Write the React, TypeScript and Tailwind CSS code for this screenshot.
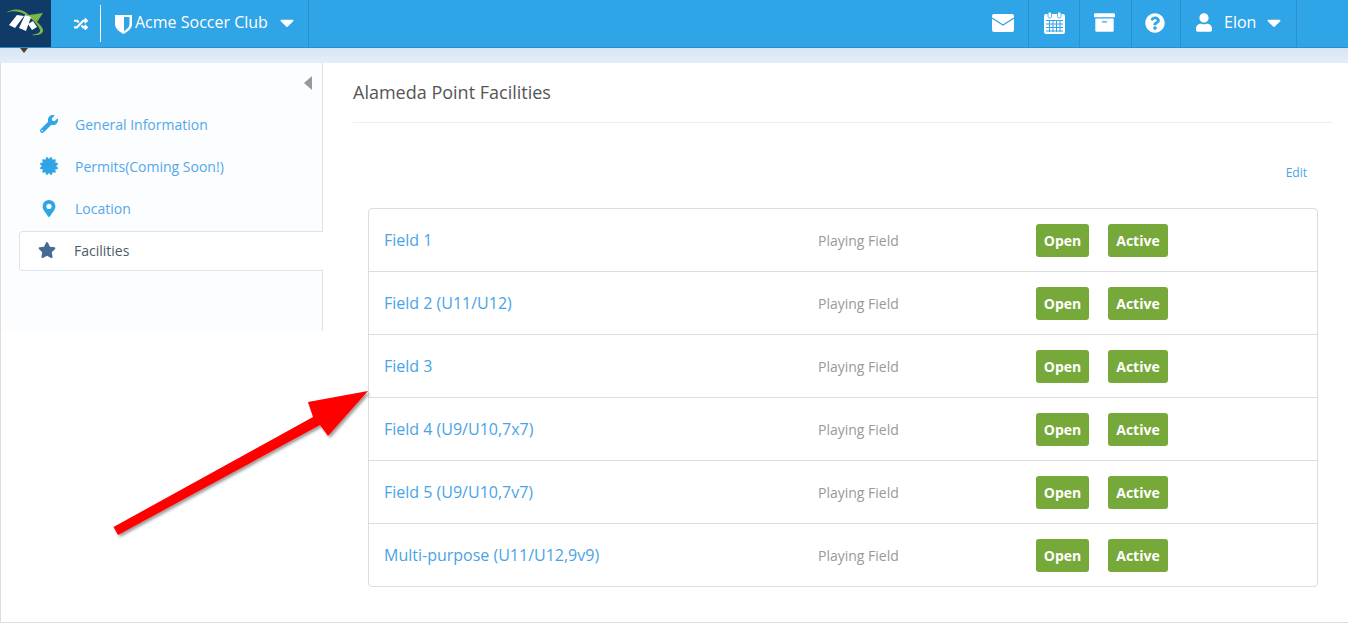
import { FaArchive, FaCaretDown, FaCertificate, FaMapMarkerAlt, FaQuestionCircle, FaRandom, FaStar, FaUser, FaWrench } from "react-icons/fa";

const fields = [
  "Field 1",
  "Field 2 (U11/U12)",
  "Field 3",
  "Field 4 (U9/U10,7x7)",
  "Field 5 (U9/U10,7v7)",
  "Multi-purpose (U11/U12,9v9)",
];

function Logo() {
  return (
    <div className="w-[51px] h-[47px] bg-[#0f3b66]">
      <svg width="51" height="47" viewBox="0 0 51 47">
        <path d="M6 13 C12 8 22 8 29 15 L43 13 L37 22 C42 26 45 31 42 33 C40 35 36 35.5 32 35 C36 34 40 33 40 31 C40 28 37 25 34 21 L26 15 C20 11 12 10 6 13Z" fill="#7ab648" />
        <path d="M9 25 L17 15 L24 16 L15 28Z M19 28 L25 15 L31 17 L26 31Z M28 24 L33 21 L37 27 L32 30Z" fill="#ffffff" />
      </svg>
    </div>
  );
}

function ShieldIcon() {
  return (
    <svg width="17" height="20" viewBox="0 0 17 20" className="ml-[14px]">
      <path fillRule="evenodd" fill="#ffffff" d="M0 1 H17 V10 C17 15 12 18 8.5 20 C5 18 0 15 0 10Z M9 3 H14.5 V10 C14.5 13 11.5 15.5 9 17Z" />
    </svg>
  );
}

function EnvelopeIcon() {
  return (
    <svg width="22" height="18" viewBox="0 0 22 18">
      <rect width="22" height="18" rx="2" fill="#ffffff" />
      <path d="M0 4 L11 11 L22 4" fill="none" stroke="#2fa4e7" strokeWidth="1.3" />
    </svg>
  );
}

function CalendarIcon() {
  return (
    <svg width="21" height="22" viewBox="0 0 21 22">
      <rect y="2" width="21" height="20" rx="2" fill="#ffffff" />
      <rect x="4" width="3.5" height="6" rx="1.5" fill="#ffffff" stroke="#2fa4e7" strokeWidth="0.8" />
      <rect x="13.5" width="3.5" height="6" rx="1.5" fill="#ffffff" stroke="#2fa4e7" strokeWidth="0.8" />
      <path d="M2 8.5 H19 M2 12 H19 M2 15.5 H19 M2 19 H19 M5.5 8 V20 M9 8 V20 M12.5 8 V20 M16 8 V20" stroke="#2fa4e7" strokeWidth="1" />
    </svg>
  );
}

function NavIcon({ children, width }: { children: React.ReactNode; width: string }) {
  return <div className={`h-[47px] pb-[2px] border-r border-[#2a90cf] flex items-center justify-center text-white ${width}`}>{children}</div>;
}

function SideItem({ icon, label, active }: { icon: React.ReactNode; label: string; active?: boolean }) {
  if (active) {
    return (
      <div className="h-[40px] mt-[2px] ml-[18px] -mr-px pb-[2px] flex items-center bg-white border border-r-0 border-[#dde3ea] rounded-l-[4px] text-[#4a5a6a] relative">
        <span className="w-[54px] pl-[18px] text-[#456b94]">{icon}</span>
        <span className="text-[14px]">{label}</span>
      </div>
    );
  }
  return (
    <div className="h-[42px] pl-[38px] flex items-center text-[#55a7ea]">
      <span className="w-[36px] pl-px text-[#2fa4e7]">{icon}</span>
      <span className="text-[14px]">{label}</span>
    </div>
  );
}

function FieldRow({ name, last }: { name: string; last: boolean }) {
  return (
    <div className={`flex items-center pl-[15px] ${last ? "h-[62px]" : "h-[63px] border-b border-[#dddddd]"}`}>
      <div className="w-[434px] text-[16px] text-[#4aa3e6]">{name}</div>
      <div className="w-[218px] text-[14px] text-[#999999]">Playing Field</div>
      <span className="w-[53px] h-[33px] rounded-[3px] bg-[#76a83a] text-white text-[14px] font-bold flex items-center justify-center">Open</span>
      <span className="w-[60px] h-[33px] ml-[19px] rounded-[3px] bg-[#76a83a] text-white text-[14px] font-bold flex items-center justify-center">Active</span>
    </div>
  );
}

export default function App() {
  return (
    <div className="w-[1348px] h-[624px] overflow-hidden bg-white relative font-['Open_Sans',sans-serif]">
      <header className="h-[48px] bg-[#2fa4e7] border-b border-[#2a8cc8] flex items-start relative z-10">
        <Logo />
        <div className="w-[258px] h-[47px] border-r border-[#2a90cf] flex items-center text-white">
          <FaRandom className="ml-[22px] w-[16px] h-[14px]" />
          <div className="w-px h-[37px] bg-white ml-[11px]" />
          <ShieldIcon />
          <span className="ml-[3px] mb-[3px] text-[16px]">Acme Soccer Club</span>
          <FaCaretDown className="ml-[12px] mb-[2px] w-[14px] h-[23px]" />
        </div>
        <div className="ml-auto flex">
          <NavIcon width="w-[49px] pr-[3px]"><EnvelopeIcon /></NavIcon>
          <NavIcon width="w-[51px]"><CalendarIcon /></NavIcon>
          <NavIcon width="w-[52px] pr-[2px]"><FaArchive className="w-[21px] h-[21px]" /></NavIcon>
          <NavIcon width="w-[49px] pr-[2px]"><FaQuestionCircle className="w-[20px] h-[20px]" /></NavIcon>
          <div className="w-[116px] h-[47px] pb-[2px] border-r border-[#2a90cf] flex items-center text-white pl-[15px]">
            <FaUser className="w-[16px] h-[19px]" />
            <span className="ml-[12px] mb-[1px] text-[16px]">Elon</span>
            <FaCaretDown className="ml-[11px] w-[14px] h-[23px]" />
          </div>
        </div>
        <div className="w-[51px]" />
      </header>
      <div className="absolute left-[20px] top-[48px] w-0 h-0 border-x-[4px] border-x-transparent border-t-[5px] border-t-[#4a4030] z-10" />
      <div className="h-[15px] bg-gradient-to-b from-[#d8e5f3] to-[#e4eef9]" />
      <div className="h-[560px] flex border-l border-b border-[#dddddd]">
        <aside className="w-[322px] h-[268px] bg-[#fbfdff] border-r border-[#dde3ea] shrink-0">
          <div className="h-[40px] pt-[13px] pr-[10px] flex justify-end">
            <div className="w-0 h-0 border-y-[7px] border-y-transparent border-r-[8px] border-r-[#999999]" />
          </div>
          <SideItem icon={<FaWrench className="w-[18px] h-[18px]" />} label="General Information" />
          <SideItem icon={<FaCertificate className="w-[18px] h-[18px]" />} label="Permits(Coming Soon!)" />
          <SideItem icon={<FaMapMarkerAlt className="w-[18px] h-[17px]" />} label="Location" />
          <SideItem active icon={<FaStar className="w-[18px] h-[18px]" />} label="Facilities" />
        </aside>
        <main className="flex-1 pl-[30px] pr-[15px]">
          <div className="h-[60px] border-b border-[#eeeeee] flex items-center pb-[1px] text-[18px] text-[#555555]">Alameda Point Facilities</div>
          <div className="h-[85px] pt-[42px] pr-[26px] text-right text-[12px] leading-[16px] text-[#4aa3e6]">Edit</div>
          <div className="ml-[15px] w-[950px] border border-[#dddddd] rounded-[4px]">
            {fields.map((name, i) => (
              <FieldRow key={name} name={name} last={i === fields.length - 1} />
            ))}
          </div>
        </main>
      </div>
      <svg className="absolute left-0 top-0 pointer-events-none z-20" width="1348" height="624" viewBox="0 0 1348 624">
        <defs>
          <filter id="arrowShadow" x="-10%" y="-10%" width="120%" height="120%">
            <feDropShadow dx="2" dy="2" stdDeviation="1.5" floodColor="#000000" floodOpacity="0.4" />
          </filter>
        </defs>
        <path d="M113.5 527 L313 417 L308 402 L368 391 L328 436 L320 425 L118 535Z" fill="#ff0000" filter="url(#arrowShadow)" />
      </svg>
    </div>
  );
}
